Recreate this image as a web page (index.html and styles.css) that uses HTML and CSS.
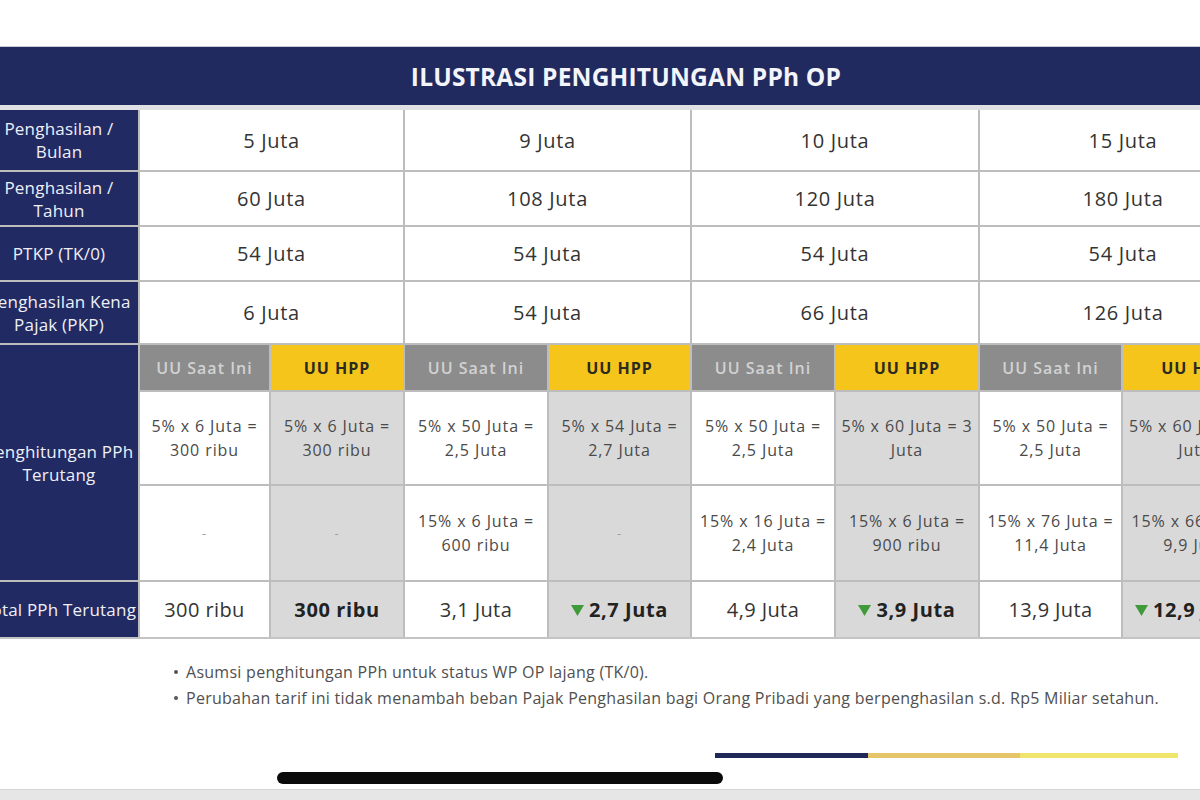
FILE: index.html
```html
<!DOCTYPE html>
<html lang="id">
<head>
<meta charset="utf-8">
<title>Ilustrasi Penghitungan PPh OP</title>
<link rel="stylesheet" href="styles.css">
</head>
<body>
<div class="screen">
  <header class="title-bar"><h1>ILUSTRASI PENGHITUNGAN PPh OP</h1></header>
  <div class="grid">
    <div class="label">Penghasilan /<br>Bulan</div>
    <div class="val span2">5 Juta</div>
    <div class="val span2">9 Juta</div>
    <div class="val span2">10 Juta</div>
    <div class="val span2">15 Juta</div>

    <div class="label">Penghasilan /<br>Tahun</div>
    <div class="val span2">60 Juta</div>
    <div class="val span2">108 Juta</div>
    <div class="val span2">120 Juta</div>
    <div class="val span2">180 Juta</div>

    <div class="label">PTKP (TK/0)</div>
    <div class="val span2">54 Juta</div>
    <div class="val span2">54 Juta</div>
    <div class="val span2">54 Juta</div>
    <div class="val span2">54 Juta</div>

    <div class="label">Penghasilan Kena<br>Pajak (PKP)</div>
    <div class="val span2">6 Juta</div>
    <div class="val span2">54 Juta</div>
    <div class="val span2">66 Juta</div>
    <div class="val span2">126 Juta</div>

    <div class="label tall">Penghitungan PPh<br>Terutang</div>
    <div class="sub now">UU Saat Ini</div>
    <div class="sub hpp">UU HPP</div>
    <div class="sub now">UU Saat Ini</div>
    <div class="sub hpp">UU HPP</div>
    <div class="sub now">UU Saat Ini</div>
    <div class="sub hpp">UU HPP</div>
    <div class="sub now">UU Saat Ini</div>
    <div class="sub hpp">UU HPP</div>

    <div class="calc">5% x 6 Juta =<br>300 ribu</div>
    <div class="calc grey">5% x 6 Juta =<br>300 ribu</div>
    <div class="calc">5% x 50 Juta =<br>2,5 Juta</div>
    <div class="calc grey">5% x 54 Juta =<br>2,7 Juta</div>
    <div class="calc">5% x 50 Juta =<br>2,5 Juta</div>
    <div class="calc grey">5% x 60 Juta = 3<br>Juta</div>
    <div class="calc">5% x 50 Juta =<br>2,5 Juta</div>
    <div class="calc grey">5% x 60 Juta = 3<br>Juta</div>

    <div class="calc dash">-</div>
    <div class="calc grey dash">-</div>
    <div class="calc">15% x 6 Juta =<br>600 ribu</div>
    <div class="calc grey dash">-</div>
    <div class="calc">15% x 16 Juta =<br>2,4 Juta</div>
    <div class="calc grey">15% x 6 Juta =<br>900 ribu</div>
    <div class="calc">15% x 76 Juta =<br>11,4 Juta</div>
    <div class="calc grey">15% x 66 Juta =<br>9,9 Juta</div>

    <div class="label">Total PPh Terutang</div>
    <div class="total">300 ribu</div>
    <div class="total grey bold">300 ribu</div>
    <div class="total">3,1 Juta</div>
    <div class="total grey bold"><svg class="down" viewBox="0 0 12 10" width="13" height="11"><polygon points="0,0 12,0 6,10" fill="#3f9b3a"/></svg>2,7 Juta</div>
    <div class="total">4,9 Juta</div>
    <div class="total grey bold"><svg class="down" viewBox="0 0 12 10" width="13" height="11"><polygon points="0,0 12,0 6,10" fill="#3f9b3a"/></svg>3,9 Juta</div>
    <div class="total">13,9 Juta</div>
    <div class="total grey bold left"><svg class="down" viewBox="0 0 12 10" width="13" height="11"><polygon points="0,0 12,0 6,10" fill="#3f9b3a"/></svg>12,9 Juta</div>
  </div>

  <ul class="notes">
    <li>Asumsi penghitungan PPh untuk status WP OP lajang (TK/0).</li>
    <li>Perubahan tarif ini tidak menambah beban Pajak Penghasilan bagi Orang Pribadi yang berpenghasilan s.d. Rp5 Miliar setahun.</li>
  </ul>

  <div class="progress">
    <span class="seg navy"></span>
    <span class="seg gold"></span>
    <span class="seg yellow"></span>
  </div>
  <div class="home-indicator"></div>
  <div class="bottom-strip"></div>
</div>
</body>
</html>
```
FILE: styles.css
```css
* { box-sizing: border-box; }
html, body { margin: 0; padding: 0; background: #ffffff; }
body { font-family: "Open Sans", "Noto Sans", sans-serif; }

.screen {
  width: 1200px;
  height: 800px;
  overflow: hidden;
  background: #ffffff;
  padding-top: 46px;
}

.title-bar {
  height: 59px;
  background: #212a5f;
  border-top: 1px solid #c9ccd6;
  display: flex;
  align-items: center;
  justify-content: center;
  padding-left: 52px;
}
.title-bar h1 {
  margin: 0;
  color: #f4f5fa;
  font-size: 24.5px;
  font-weight: 700;
  letter-spacing: 0.2px;
}

.grid {
  display: grid;
  width: max-content;
  margin-left: -20px;
  grid-template-columns: 158px 129px 132px 142px 141px 142px 142px 141px 143px;
  grid-template-rows: 60px 53px 53px 61px 45px 92px 94px 55px;
  gap: 2px;
  background: #bdbdbd;
  border-top: 5px solid #dfe0e4;
  border-bottom: 2px solid #c4c4c4;
}

.label {
  background: #212a62;
  color: #eef0f8;
  font-size: 17px;
  line-height: 23px;
  letter-spacing: 0.2px;
  text-align: center;
  display: flex;
  align-items: center;
  justify-content: center;
  padding: 0;
  white-space: nowrap;
}
.label.tall { grid-row: span 3; }

.val {
  background: #ffffff;
  color: #333333;
  font-size: 20px;
  letter-spacing: 0.7px;
  display: flex;
  align-items: center;
  justify-content: center;
}
.span2 { grid-column: span 2; }

.sub {
  display: flex;
  align-items: center;
  justify-content: center;
  font-size: 16px;
  letter-spacing: 1px;
}
.sub.now { background: #8c8c8c; color: #d2d2d2; font-weight: 600; }
.sub.hpp { background: #f6c51c; color: #2b2b20; font-weight: 700; }

.calc {
  background: #ffffff;
  color: #4a4a4a;
  font-size: 16px;
  line-height: 24px;
  letter-spacing: 0.9px;
  text-align: center;
  display: flex;
  align-items: center;
  justify-content: center;
  white-space: nowrap;
}
.calc.dash { color: #a0a0a0; font-size: 13px; }
.grey { background: #d9d9d9; }

.total {
  background: #ffffff;
  color: #333333;
  font-size: 20px;
  letter-spacing: 0.4px;
  display: flex;
  align-items: center;
  justify-content: center;
  white-space: nowrap;
}
.total.grey { background: #d9d9d9; }
.total.bold { font-weight: 700; color: #222222; letter-spacing: 0.6px; }
.total.left { justify-content: flex-start; padding-left: 12px; }
.down { margin-right: 5px; margin-top: 2px; flex: none; }

.notes {
  margin: 20px 0 0 0;
  padding: 0 0 0 186px;
  list-style: none;
  color: #505050;
  font-size: 16px;
  line-height: 26px;
  letter-spacing: 0.27px;
  white-space: nowrap;
}
.notes li { position: relative; }
.notes li::before {
  content: "";
  position: absolute;
  left: -12px;
  top: 11px;
  width: 4px;
  height: 4px;
  border-radius: 50%;
  background: #555555;
}

.progress {
  display: flex;
  margin: 42px 0 0 715px;
  width: 463px;
  height: 5px;
}
.seg { display: block; height: 100%; }
.seg.navy { width: 153px; background: #1f2857; }
.seg.gold { width: 152px; background: #e6c56a; }
.seg.yellow { width: 158px; background: #efe46c; }

.home-indicator {
  margin: 14px 0 0 277px;
  width: 446px;
  height: 12px;
  border-radius: 6px;
  background: #0a0a0a;
}

.bottom-strip {
  margin-top: 5px;
  height: 12px;
  background: #e6e6e6;
  border-top: 1px solid #d6d6d6;
}
```
